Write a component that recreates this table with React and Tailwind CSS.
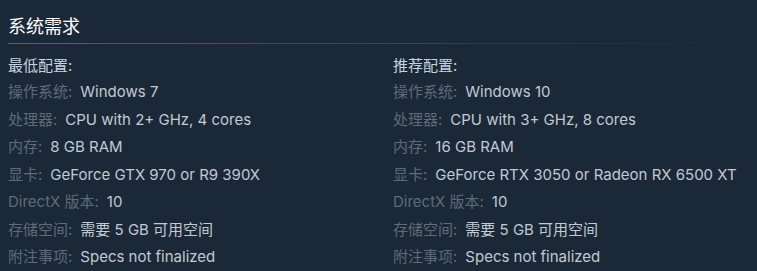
const minimum = [
  ['操作系统:', 'Windows 7'],
  ['处理器:', 'CPU with 2+ GHz, 4 cores'],
  ['内存:', '8 GB RAM'],
  ['显卡:', 'GeForce GTX 970 or R9 390X'],
  ['DirectX 版本:', '10'],
  ['存储空间:', '需要 5 GB 可用空间'],
  ['附注事项:', 'Specs not finalized'],
];

const recommended = [
  ['操作系统:', 'Windows 10'],
  ['处理器:', 'CPU with 3+ GHz, 8 cores'],
  ['内存:', '16 GB RAM'],
  ['显卡:', 'GeForce RTX 3050 or Radeon RX 6500 XT'],
  ['DirectX 版本:', '10'],
  ['存储空间:', '需要 5 GB 可用空间'],
  ['附注事项:', 'Specs not finalized'],
];

function ReqColumn({ title, rows }) {
  return (
    <div className="flex flex-col">
      <div className="h-[24px] leading-[24px] text-[#c6d4df]">{title}</div>
      {rows.map(([label, value]) => (
        <div key={label} className="h-[27.5px] leading-[27.5px] whitespace-nowrap">
          <span className="text-[#5f6b77]">{label}</span>
          <span className="ml-[8px] text-[#c2cad2]">{value}</span>
        </div>
      ))}
    </div>
  );
}

export default function App() {
  return (
    <div
      className="w-[757px] h-[271px] bg-[#1b2838] px-2 pt-[14px] text-[15px] overflow-hidden"
      style={{ fontFamily: 'Inter, "Noto Sans CJK SC", sans-serif' }}
    >
      <div className="text-[18px] leading-[26px] text-[#ffffff]">系统需求</div>
      <div className="h-px mt-[3px] bg-gradient-to-r from-[#3b6c88] via-[#2c4a5e] to-transparent w-[720px]" />
      <div className="grid grid-cols-[385px_1fr] mt-[10px]">
        <ReqColumn title="最低配置:" rows={minimum} />
        <ReqColumn title="推荐配置:" rows={recommended} />
      </div>
    </div>
  );
}
